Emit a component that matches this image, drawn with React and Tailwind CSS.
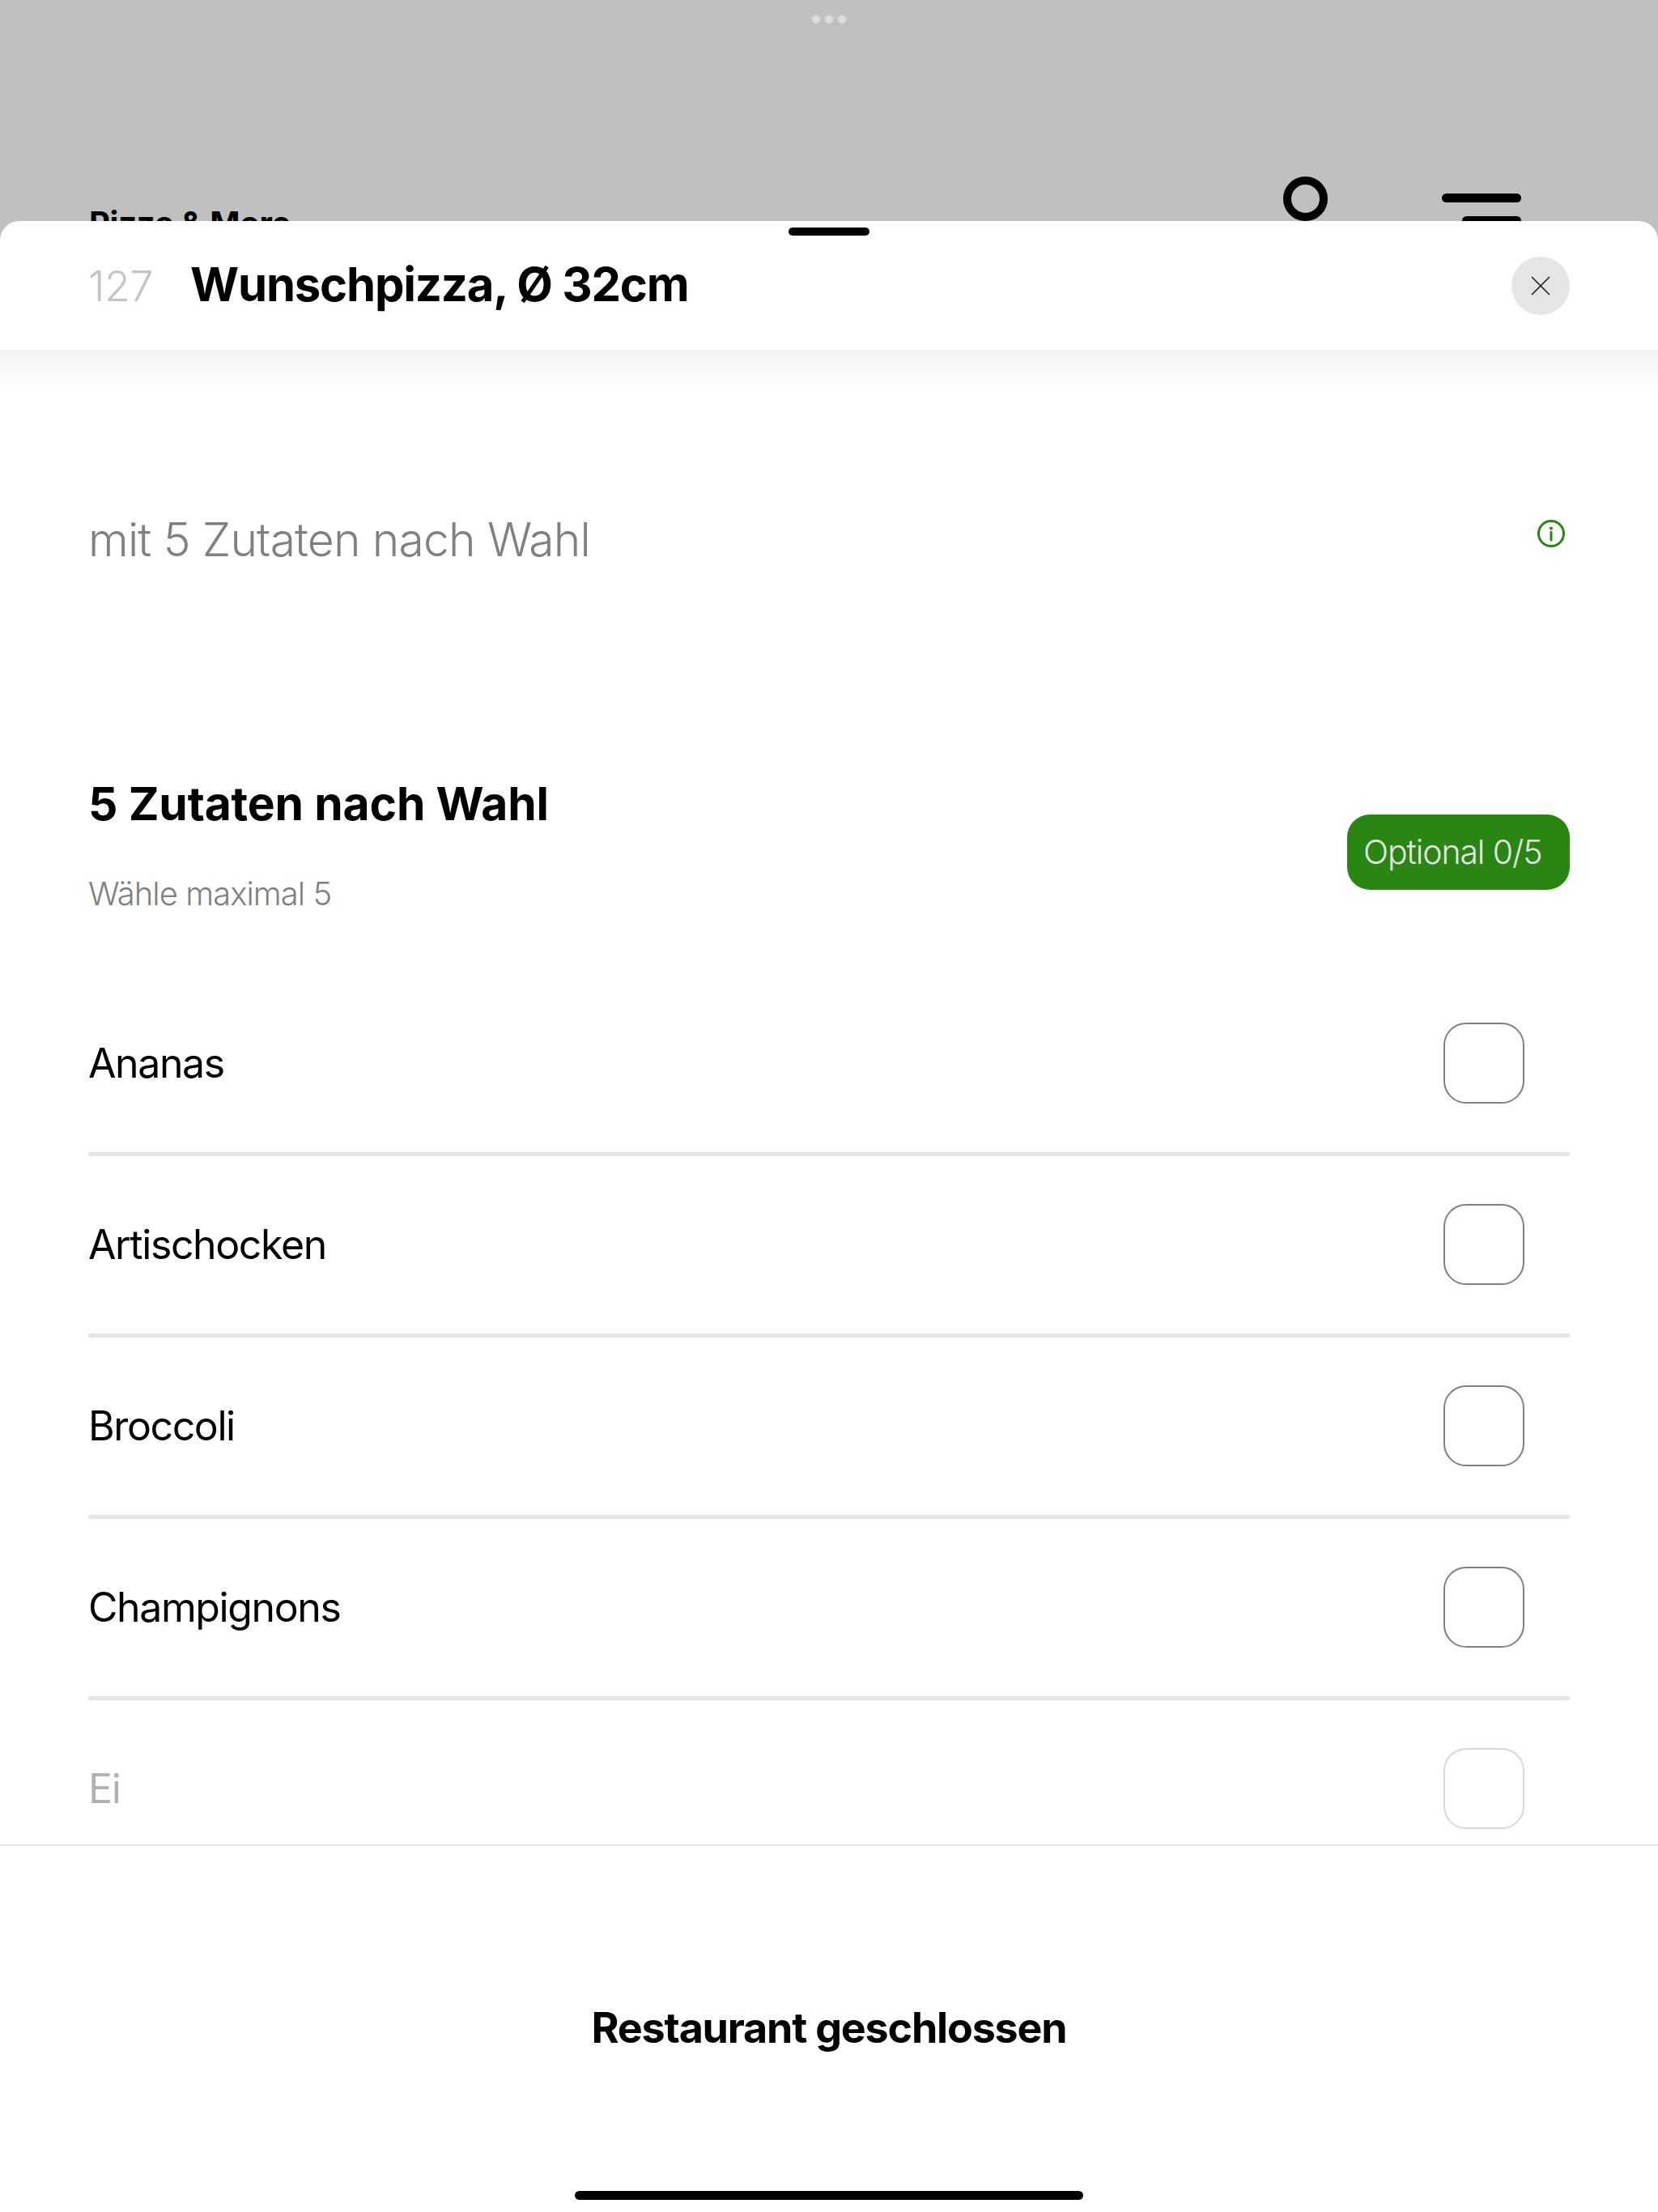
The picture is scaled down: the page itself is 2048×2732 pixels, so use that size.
import React from 'react';

const toppings = ['Ananas', 'Artischocken', 'Broccoli', 'Champignons'];

function ToppingRow({ name }) {
    return (
        <div className="h-[224px] flex items-center justify-between border-b-[5px] border-[#e4e4e4]">
            <span className="text-[50px] tracking-[-1.4px] text-black">{name}</span>
            <div className="w-[100px] h-[100px] mr-[56px] mb-[1px] rounded-[28px] border-2 border-[#808080] bg-white" />
        </div>
    );
}

export default function App() {
    return (
        <div className="w-[2048px] h-[2732px] overflow-hidden bg-white font-['Inter',sans-serif]">
            {/* page behind the sheet */}
            <div className="h-[297px] bg-[#c0c0c0] relative">
                <div className="flex justify-center gap-[6px] pt-[19px]">
                    <div className="w-[10px] h-[10px] rounded-full bg-[#dedede]" />
                    <div className="w-[10px] h-[10px] rounded-full bg-[#dedede]" />
                    <div className="w-[10px] h-[10px] rounded-full bg-[#dedede]" />
                </div>
                <div className="flex items-start justify-between pl-[110px] pr-[169px] pt-[189px]">
                    <span className="text-[40px] leading-[48px] font-bold tracking-[-0.3px] text-black mt-[34px]">Pizza &amp; More</span>
                    <div className="flex items-start gap-[141px]">
                        <div className="w-[55px] h-[55px] rounded-full border-[10px] border-black" />
                        <div className="flex flex-col items-end gap-[17px] mt-[21px]">
                            <div className="w-[98px] h-[11px] rounded-full bg-black" />
                            <div className="w-[73px] h-[11px] rounded-full bg-black" />
                        </div>
                    </div>
                </div>
            </div>

            {/* sheet */}
            <div className="relative -mt-[24px] h-[2459px] flex flex-col bg-white rounded-t-[24px] overflow-hidden">
                <div className="absolute top-[8px] left-[974px] w-[100px] h-[10px] rounded-full bg-black" />
                <div className="h-[159px] shrink-0 flex items-center justify-between pl-[109px] pr-[109px]">
                    <div className="flex items-baseline pb-[2px]">
                        <span className="w-[126px] text-[52px] font-light tracking-[-0.5px] text-[#c4c4c4]">127</span>
                        <span className="text-[58px] font-bold tracking-[-1.2px] text-black">Wunschpizza, Ø 32cm</span>
                    </div>
                    <button className="w-[72px] h-[72px] rounded-full bg-[#e5e5e5] flex items-center justify-center">
                        <svg width="24" height="24" viewBox="0 0 24 24" fill="none" stroke="#111" strokeWidth="1.5">
                            <path d="M1 1L23 23M23 1L1 23" />
                        </svg>
                    </button>
                </div>

                <div className="flex-1 min-h-0 overflow-hidden relative px-[109px]">
                    <div className="absolute top-0 left-0 right-0 h-[48px] bg-gradient-to-b from-[#f3f3f3] to-white" />
                    <div className="relative flex items-start justify-between pt-[192px]">
                        <p className="text-[57px] leading-[86px] font-[350] tracking-[-0.85px] text-[#808080]">mit 5 Zutaten nach Wahl</p>
                        <svg className="mt-[18px] mr-[6px]" width="34" height="34" viewBox="0 0 34 34" fill="none">
                            <circle cx="17" cy="17" r="15.5" stroke="#2a8613" strokeWidth="3" />
                            <circle cx="17" cy="10.5" r="2" fill="#2a8613" />
                            <path d="M17 15V25" stroke="#2a8613" strokeWidth="3" strokeLinecap="round" />
                        </svg>
                    </div>

                    <div className="flex items-start justify-between mt-[240px]">
                        <div>
                            <h2 className="text-[57px] leading-[86px] font-bold tracking-[-0.15px] text-black">5 Zutaten nach Wahl</h2>
                            <p className="mt-[38px] text-[40px] leading-[60px] font-[350] tracking-[-0.95px] text-[#808080]">Wähle maximal 5</p>
                        </div>
                        <div className="mt-[56px] w-[275px] h-[93px] flex items-center pl-[20px] rounded-[28px] bg-[#2a8613] text-[41px] font-light tracking-[-1.1px] text-[#e6e6e6]">
                            Optional 0/5
                        </div>
                    </div>

                    <div className="mt-[70px]">
                        {toppings.map((name) => (
                            <ToppingRow key={name} name={name} />
                        ))}
                        <div className="h-[224px] flex items-center justify-between pb-[5px] opacity-30">
                            <span className="text-[50px] tracking-[-1.4px] text-black">Ei</span>
                            <div className="w-[100px] h-[100px] mr-[56px] mb-[1px] rounded-[28px] border-2 border-[#808080] bg-white" />
                        </div>
                    </div>
                </div>

                <div className="h-[454px] shrink-0 border-t-2 border-[#e4e4e4] bg-white flex flex-col items-center">
                    <p className="mt-[186px] text-[52px] leading-[78px] font-bold tracking-[-1.2px] text-black">Restaurant geschlossen</p>
                    <div className="mt-[162px] w-[628px] h-[11px] rounded-full bg-black" />
                </div>
            </div>
        </div>
    );
}
